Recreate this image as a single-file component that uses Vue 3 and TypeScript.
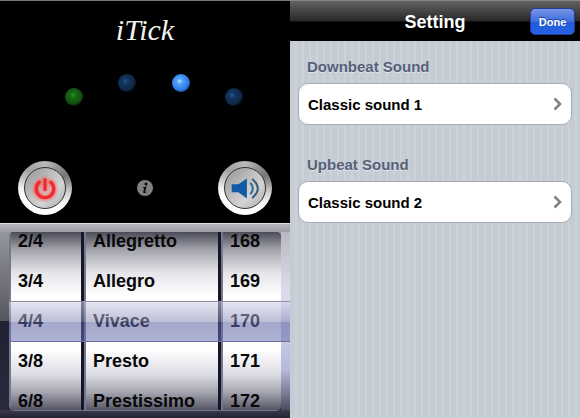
<script setup lang="ts">
import { ref } from 'vue'

interface Wheel {
  name: string
  label: string
  options: string[]
}

const wheels: Wheel[] = [
  { name: 'meter', label: 'Time signature', options: ['2/4', '3/4', '4/4', '3/8', '6/8'] },
  { name: 'tempo', label: 'Tempo', options: ['Allegretto', 'Allegro', 'Vivace', 'Presto', 'Prestissimo'] },
  { name: 'bpm', label: 'Beats per minute', options: ['168', '169', '170', '171', '172'] },
]

const selected = ref<Record<string, string>>({ meter: '4/4', tempo: 'Vivace', bpm: '170' })

const beats = ['green', 'dim', 'lit', 'dim']

const sounds = [
  { id: 'downbeat', title: 'Downbeat Sound', value: 'Classic sound 1' },
  { id: 'upbeat', title: 'Upbeat Sound', value: 'Classic sound 2' },
]
</script>

<template>
  <main class="app">
    <section class="metronome">
      <div class="stage">
        <h1 class="logo">iTick</h1>
        <div class="beats">
          <span v-for="(beat, i) in beats" :key="i" class="beat" :class="beat"></span>
        </div>
        <div class="controls">
          <button class="knob" type="button" aria-label="Power">
            <svg class="knob-icon" viewBox="0 0 42 42">
              <g fill="none" stroke-linecap="round">
                <g class="power-glow" stroke="#ff5a58" stroke-width="7">
                  <path d="M15 15a9.200 9.200 0 1 0 12 0" />
                  <path d="M21 12.500v9.500" />
                </g>
                <g stroke="#ee2c32" stroke-width="3.500">
                  <path d="M15 15a9.200 9.200 0 1 0 12 0" />
                  <path d="M21 12.500v10" />
                </g>
              </g>
            </svg>
          </button>
          <button class="info" type="button" aria-label="Information">
            <svg viewBox="0 0 16 16" width="16" height="16">
              <circle cx="8" cy="8" r="8" fill="#808080" />
              <circle cx="9" cy="4" r="1.500" fill="#080808" />
              <path d="M5.800 7.200 9.600 6.500 8.200 11.500c-.2.8.4.7 1.400 0l.2.500C8 13.600 5.800 13.500 6.300 11.500l.9-3.600-1.500-.1z" fill="#080808" />
            </svg>
          </button>
          <button class="knob" type="button" aria-label="Volume">
            <svg class="knob-icon" viewBox="0 0 42 42">
              <path d="M7 17h7L23 11v21l-9-6.500H7z" fill="#115ba6" />
              <g fill="none" stroke-width="2.200">
                <path d="M26.500 15.500q5.500 6 0 12" stroke="#3b6e9d" />
                <path d="M28.500 11.500q12 10 0 20" stroke="#3d607f" />
              </g>
            </svg>
          </button>
        </div>
      </div>
      <div class="picker">
        <div class="wheels">
          <div v-for="wheel in wheels" :key="wheel.name" class="wheel" role="radiogroup" :aria-label="wheel.label">
            <label v-for="option in wheel.options" :key="option" class="option">
              <input v-model="selected[wheel.name]" type="radio" :name="wheel.name" :value="option" />
              {{ option }}
            </label>
          </div>
        </div>
        <div class="lens"></div>
      </div>
    </section>

    <section class="settings">
      <header class="bar">
        <span></span>
        <h2 class="bar-title">Setting</h2>
        <button class="done" type="button">Done</button>
      </header>
      <div class="groups">
        <div v-for="sound in sounds" :key="sound.id" class="group">
          <h3 :id="sound.id" class="group-title">{{ sound.title }}</h3>
          <button class="row" type="button" :aria-describedby="sound.id">
            {{ sound.value }}
            <svg viewBox="0 0 9 14" width="9" height="14">
              <path d="M1.500 1.500 7 7l-5.500 5.500" fill="none" stroke="#808080" stroke-width="2.500" />
            </svg>
          </button>
        </div>
      </div>
    </section>
  </main>
</template>

<style>
body {
  margin: 0;
  background: #000;
}
</style>

<style scoped>
.app {
  display: grid;
  grid-template-columns: 1fr 1fr;
  min-height: 100vh;
  font-family: "Liberation Sans", Arial, sans-serif;
  font-weight: bold;
}

button {
  padding: 0;
  border: 0;
  font: inherit;
  cursor: pointer;
}

h1,
h2,
h3 {
  margin: 0;
}

.metronome {
  display: flex;
  flex-direction: column;
  background: #000;
}

.stage {
  padding: 10px 18px 8px;
  border-top: 1px solid #777;
}

.logo {
  color: #f2f2f2;
  font: italic 30px/38px "Liberation Serif", serif;
  text-align: center;
}

.beats {
  display: flex;
  justify-content: space-between;
  padding: 25px 29px 0 47px;
}

.beat {
  width: 18px;
  height: 18px;
  margin-bottom: 14px;
  border-radius: 50%;
}

.beat:first-child,
.beat:last-child {
  margin: 14px 0 0;
}

.green {
  background: radial-gradient(circle at 45% 40%, #259423 0, #166b15 20%, #124d11 60%, #020a02 76%);
}

.dim {
  background: radial-gradient(circle at 40% 40%, #23588c 0, #12345f 20%, #0f2744 60%, #01040a 76%);
}

.lit {
  background: radial-gradient(circle at 42% 40%, #c5e9ff 0, #54a4fa 18%, #2f80ee 55%, #2468c8 68%, #071a3a 80%);
}

.controls {
  display: flex;
  align-items: center;
  justify-content: space-between;
  margin-top: 55px;
}

.knob {
  display: grid;
  place-items: center;
  width: 54px;
  height: 54px;
  border-radius: 50%;
  background:
    linear-gradient(#0000 35%, #fff 90%),
    conic-gradient(#bbb, #777 16%, #aaa 28%, #eee 48%, #fff 70%, #a2a2a2 88%, #bbb);
}

.knob-icon {
  box-sizing: border-box;
  width: 42px;
  height: 42px;
  border: 1px solid #333;
  border-radius: 50%;
  background: linear-gradient(135deg, #999 5%, #c2c2c2 45%, #d4d4d4 65%, #aaa);
}

.power-glow {
  filter: blur(1px);
  opacity: 0.6;
}

.info {
  display: grid;
  border-radius: 50%;
  background: none;
}

.picker {
  position: relative;
  display: flex;
  flex: 1;
  padding: 8px 9px;
  border-top: 1px solid #dcdce2;
  background:
    linear-gradient(#b4b4bc, #9c9ca5) top / 100% 8px no-repeat,
    linear-gradient(#3a3a4c, #242434) bottom / 100% 8px no-repeat,
    linear-gradient(#b4b4be, #dcdcec 35%, #d2d3ea 50%, #b8b9dc 75%, #8586a2 85%, #34344a) right / 9px 100% no-repeat,
    linear-gradient(#9c9ca4, #55555e 50%, #202134 50%, #2c2b3d);
}

.wheels {
  display: grid;
  grid-template-columns: 75fr 137fr 60fr;
  flex: 1;
  height: 178px;
  border-radius: 5px;
  background: #16162b;
  box-shadow: 0 1px #77778a;
  overflow: hidden;
}

.wheel {
  display: flex;
  flex-direction: column;
  justify-content: center;
  box-sizing: border-box;
  height: 178px;
  border-right: 3px solid #16162b;
  border-left: 2px solid #77778a;
  background: linear-gradient(#4b4b58, #a4a4ad 10%, #e5e5ea 23%, #fff 36%, #fff 66%, #dcdce4 80%, #a6a6b2 90%, #555564);
}

.wheel:last-child {
  border-right: 0;
}

.option {
  flex: none;
  padding-left: 7px;
  color: #080808;
  font-size: 18px;
  line-height: 40px;
  white-space: nowrap;
  cursor: pointer;
}

.option input {
  position: absolute;
  margin: 0;
  opacity: 0;
  pointer-events: none;
}

.lens {
  position: absolute;
  inset: 77px 0 auto 9px;
  box-sizing: border-box;
  height: 41px;
  border-top: 1px solid #8b8ba5;
  border-bottom: 1px solid #686e9d;
  background: linear-gradient(#d2d4e890, #8c8fb890 50%, #585f9e8c 50%, #6b72b08c);
  pointer-events: none;
}

.settings {
  background: repeating-linear-gradient(90deg, #c5ccd4 0 5px, #cbd2d8 5px 7px);
}

.bar {
  display: grid;
  grid-template-columns: 1fr auto 1fr;
  align-items: center;
  box-sizing: border-box;
  height: 41px;
  padding-top: 1px;
  border-top: 1px solid #858585;
  background: linear-gradient(#626262, #282828 50%, #000 52%);
}

.bar-title {
  color: #fff;
  font-size: 18px;
  line-height: 24px;
}

.done {
  justify-self: end;
  width: 45px;
  height: 27px;
  margin-right: 5px;
  border: 1px solid #243f92;
  border-radius: 5px;
  background: linear-gradient(#7594e6, #3e6ddf 50%, #2159dc 51%, #2562e4);
  color: #fff;
  font-size: 11px;
  text-shadow: 0 -1px #1c3c8c;
}

.groups {
  display: grid;
  gap: 30px;
  padding: 16px 8px;
}

.group {
  display: grid;
  gap: 6px;
}

.group-title {
  padding-left: 9px;
  color: #566078;
  font-size: 15px;
  line-height: 20px;
  text-shadow: 0 1px #e2e6eb;
}

.row {
  display: flex;
  align-items: center;
  justify-content: space-between;
  height: 42px;
  padding: 0 9px;
  border: 1px solid #a6abb1;
  border-radius: 10px;
  background: #fff;
  color: #000;
  font-size: 15px;
}
</style>
